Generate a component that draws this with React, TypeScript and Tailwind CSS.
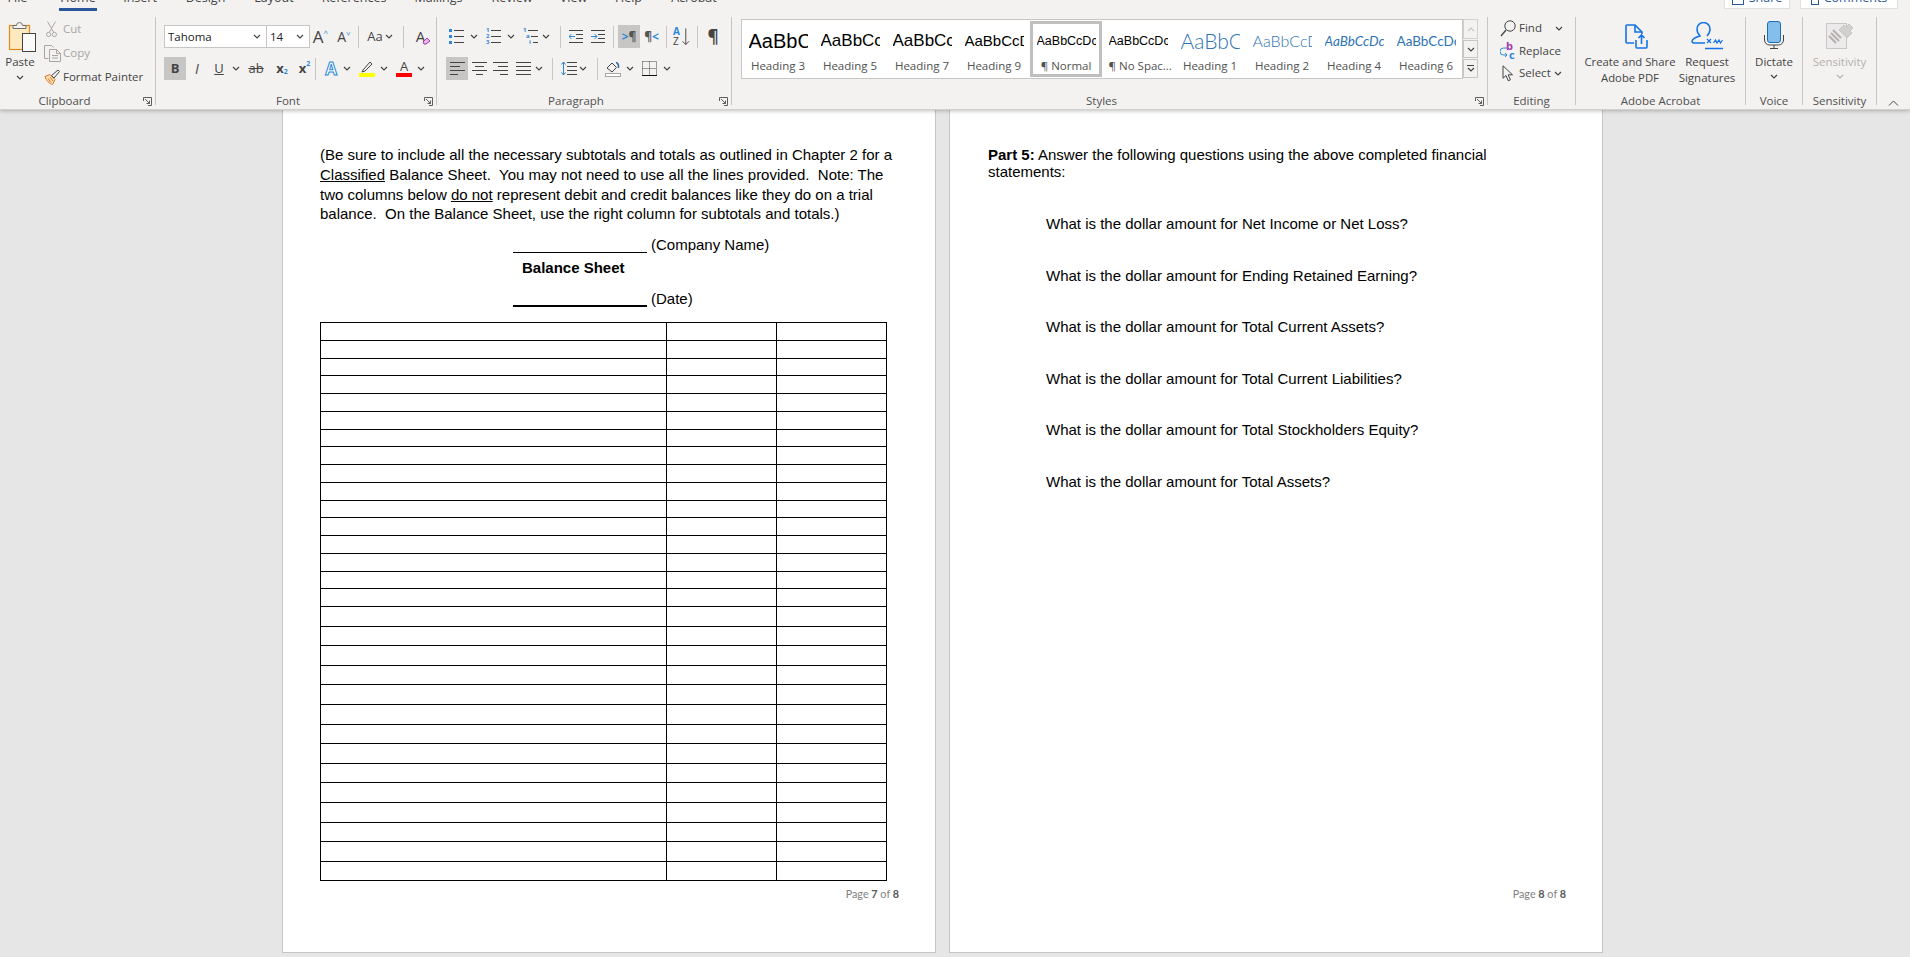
import type { ReactNode } from "react";

// small chevron used all over the ribbon
function Chev({ color = "#444444" }: { color?: string }) {
  return (
    <svg width="8" height="5" viewBox="0 0 8 5" fill="none" stroke={color} strokeWidth="1.2">
      <path d="M1 1l3 3 3-3" />
    </svg>
  );
}

function Cell({ className = "", children }: { className?: string; children?: ReactNode }) {
  return <div className={`flex h-[23px] shrink-0 items-center justify-center ${className}`}>{children}</div>;
}

function Sep({ className = "" }: { className?: string }) {
  return <div className={`h-[22px] w-px shrink-0 self-center bg-[#c8c6c4] ${className}`} />;
}

function Launcher() {
  return (
    <svg width="9" height="9" viewBox="0 0 9 9" fill="none" stroke="#605e5c" className="mr-[3px] ml-[4px] shrink-0">
      <path d="M.5 4V.5h8v8H5" />
      <path d="M2 2l4.5 4.5M6.5 3.5v3h-3" />
    </svg>
  );
}

function Group({ label, launcher, className, labelClass = "", children }: { label: string; launcher?: boolean; className: string; labelClass?: string; children: ReactNode }) {
  return (
    <div className={`flex h-[88px] shrink-0 flex-col border-r border-[#c8c6c4] ${className}`}>
      <div className="min-h-0 flex-1">{children}</div>
      <div className="-mb-1 flex h-4 shrink-0 items-center text-[11.5px] text-[#505050]">
        <span className={`flex-1 text-center ${labelClass}`}>{label}</span>
        {launcher && <Launcher />}
      </div>
    </div>
  );
}

function Lines({ n = 4, w = 15, x = 0 }: { n?: number; w?: number; x?: number }) {
  const gap = 12 / (n - 1);
  return (
    <>
      {Array.from({ length: n }).map((_, i) => (
        <line key={i} x1={x} x2={x + w} y1={1.5 + i * gap} y2={1.5 + i * gap} stroke="#444444" />
      ))}
    </>
  );
}

function PasteIcon() {
  return (
    <svg width="32" height="32" viewBox="0 0 32 32" fill="none" className="ml-[8px]">
      <rect x="1.5" y="4.5" width="20" height="24" fill="#fde9bd" stroke="#e08a1e" strokeWidth="1.2" />
      <path d="M5 4.5h3.5a2.5 2.5 0 0 1 6 0H18v3H5z" fill="#f3f2f1" stroke="#6e6e6e" />
      <rect x="14.5" y="12.5" width="13" height="18" fill="#fafafa" stroke="#444444" />
    </svg>
  );
}

function ScissorsIcon() {
  return (
    <svg width="11" height="17" viewBox="0 0 11 17" fill="none" stroke="#a8a6a4">
      <path d="M1.5.5l6 10.5M9.5.5l-6 10.5" />
      <circle cx="2.6" cy="13.5" r="2.1" />
      <circle cx="8.4" cy="13.5" r="2.1" />
    </svg>
  );
}

function CopyIcon() {
  return (
    <svg width="17" height="17" viewBox="0 0 17 17" fill="none" stroke="#a8a6a4">
      <path d="M4.5 13.5H.5v-13h7l2 2" />
      <path d="M5.5 4.5h7l4 4v8h-11zM12.5 4.5v4h4M8 10.5h6M8 13h6" />
    </svg>
  );
}

function PainterIcon() {
  return (
    <svg width="17" height="16" viewBox="0 0 17 16" fill="none">
      <path d="M1 7.5l5-2 5 5-2.5 5C6 15 2 11.5 1 7.5z" fill="#fbe3b3" stroke="#d9742b" />
      <path d="M4 9.5l3 4M6 8l3 4" stroke="#d9742b" />
      <path d="M7.5 6.5l2.5 2.5 5.5-6.5-1.5-1.5z" fill="#f3f2f1" stroke="#444444" />
    </svg>
  );
}

function BulletsIcon() {
  return (
    <svg width="15" height="15" viewBox="0 0 15 15">
      <Lines n={3} w={10} x={5} />
      <rect y="0" width="3" height="3" fill="#2b88d8" />
      <rect y="6" width="3" height="3" fill="#2b88d8" />
      <rect y="12" width="3" height="3" fill="#2b88d8" />
    </svg>
  );
}

function NumberedIcon({ multi }: { multi?: boolean }) {
  return (
    <div className="relative h-[15px] w-[15px] shrink-0 font-bold text-[#2b88d8]">
      <svg width="15" height="15" viewBox="0 0 15 15">
        {multi ? (
          <>
            <line x1="5" x2="15" y1="1.5" y2="1.5" stroke="#444444" />
            <line x1="8" x2="15" y1="7.5" y2="7.5" stroke="#444444" />
            <line x1="10" x2="15" y1="13.5" y2="13.5" stroke="#444444" />
          </>
        ) : (
          <Lines n={3} w={10} x={5} />
        )}
      </svg>
      <span className="absolute top-[-2px] left-0 text-[6px] leading-[7px]">1</span>
      <span className={`absolute top-[4px] text-[6px] leading-[7px] ${multi ? "left-[3px]" : "left-0"}`}>{multi ? "a" : "2"}</span>
      <span className={`absolute top-[10px] text-[6px] leading-[7px] ${multi ? "left-[6px]" : "left-0"}`}>{multi ? "i" : "3"}</span>
    </div>
  );
}

function IndentIcon({ increase }: { increase?: boolean }) {
  return (
    <svg width="14" height="13" viewBox="0 0 14 13" fill="none">
      <line x1="0" x2="14" y1="0.5" y2="0.5" stroke="#444444" />
      <line x1="7" x2="14" y1="4.5" y2="4.5" stroke="#444444" />
      <line x1="7" x2="14" y1="8.5" y2="8.5" stroke="#444444" />
      <line x1="0" x2="14" y1="12.5" y2="12.5" stroke="#444444" />
      {increase ? (
        <path d="M0 6.5h6M3.5 4l2.5 2.5L3.5 9" stroke="#2b88d8" />
      ) : (
        <path d="M6 6.5H0M2.5 4L0 6.5 2.5 9" stroke="#2b88d8" />
      )}
    </svg>
  );
}

function AlignIcon({ kind }: { kind: "left" | "center" | "right" | "justify" }) {
  const d = {
    left: "M0 .5h15M0 4.5h10M0 8.5h15M0 12.5h8",
    center: "M0 .5h15M3 4.5h9M0 8.5h15M4 12.5h7",
    right: "M0 .5h15M5 4.5h10M0 8.5h15M7 12.5h8",
    justify: "M0 .5h15M0 4.5h15M0 8.5h15M0 12.5h15",
  }[kind];
  return (
    <svg width="15" height="13" viewBox="0 0 15 13" fill="none" stroke="#444444">
      <path d={d} />
    </svg>
  );
}

function LineSpacingIcon() {
  return (
    <svg width="16" height="15" viewBox="0 0 16 15" fill="none">
      <path d="M6 1.5h10M6 5.5h10M6 9.5h10M6 13.5h10" stroke="#444444" />
      <path d="M2.5 1v13M.5 3.5l2-2.5 2 2.5M.5 11.5l2 2.5 2-2.5" stroke="#2b88d8" />
    </svg>
  );
}

function ShadingIcon() {
  return (
    <svg width="16" height="16" viewBox="0 0 16 16" fill="none">
      <path d="M2 7l5-5 4.5 4.5-4.5 4.5z" fill="#f3f2f1" stroke="#444444" />
      <path d="M11 1.5c2 .5 2.8 2.6 2.5 5.5" stroke="#2b6cb0" strokeWidth="1.6" />
      <rect x=".5" y="12.5" width="15" height="3" fill="#ffffff" stroke="#a6a6a6" />
    </svg>
  );
}

function BordersIcon() {
  return (
    <svg width="15" height="15" viewBox="0 0 15 15" fill="none">
      <path d="M.5 .5h14v14M.5 .5v14M7.5 .5v14M.5 7.5h14" stroke="#444444" strokeDasharray="1 1" />
      <line x1="0" x2="15" y1="14.5" y2="14.5" stroke="#111111" />
    </svg>
  );
}

function SortIcon() {
  return (
    <div className="flex h-[19px] w-[17px] shrink-0 items-center">
      <div className="flex w-[10px] flex-col text-[10px] leading-[9.5px]">
        <span className="font-bold text-[#2b88d8]">A</span>
        <span className="text-[#444444]">Z</span>
      </div>
      <svg width="8" height="18" viewBox="0 0 8 18" fill="none" stroke="#444444">
        <path d="M4 0v17M.5 13.5L4 17l3.5-3.5" />
      </svg>
    </div>
  );
}

function FindIcon() {
  return (
    <svg width="16" height="17" viewBox="0 0 16 17" fill="none" stroke="#444444">
      <circle cx="10" cy="6" r="5.2" />
      <path d="M6 10l-5 6" strokeWidth="1.3" />
    </svg>
  );
}

function SelectIcon() {
  return (
    <svg width="12" height="17" viewBox="0 0 12 17" fill="none" stroke="#444444">
      <path d="M1 .8v12.5l3-2.8 2.2 5.3 2.2-1-2.2-5h4.3z" />
    </svg>
  );
}

function PdfIcon() {
  return (
    <svg width="24" height="26" viewBox="0 0 24 26" fill="none" stroke="#1473e6" strokeWidth="1.6" className="ml-[14px]">
      <path d="M9 19H2a1 1 0 0 1-1-1V2a1 1 0 0 1 1-1h8l7 7v2" />
      <path d="M10 1v7h7" />
      <path d="M11 16v7a1 1 0 0 0 1 1h9a1 1 0 0 0 1-1v-7" />
      <path d="M16.5 20v-9M13.5 14l3-3 3 3" />
    </svg>
  );
}

function SignIcon() {
  return (
    <svg width="32" height="28" viewBox="0 0 32 28" fill="none" stroke="#1473e6" strokeWidth="1.5">
      <path d="M1 19c1-3 5-4 8-5-2-2-3-4-3-7a6.500 6.500 0 0 1 13 0c0 3-1 5-3 7" />
      <path d="M1 19c0 1 .5 2 2 2h11" />
      <path d="M16 17l4 4M20 17l-4 4" strokeWidth="1.2" />
      <path d="M22.500 21l2-3 1.500 3 2-3 1.500 3 2-3" strokeWidth="1.2" />
      <path d="M14 26.500h18" strokeWidth="1.5" />
    </svg>
  );
}

function MicIcon() {
  return (
    <svg width="20" height="28" viewBox="0 0 20 28" fill="none">
      <rect x="3.500" y=".5" width="13" height="21" rx="2.500" fill="#83beec" stroke="#1a6fb5" />
      <path d="M.5 14v5a5 5 0 0 0 5 5h9a5 5 0 0 0 5-5v-5M10 24v3.500M6 27.500h8" stroke="#444444" />
    </svg>
  );
}

function StampIcon() {
  return (
    <svg width="28" height="28" viewBox="0 0 28 28" fill="none">
      <rect x=".5" y="2.500" width="20" height="25" fill="#eceaea" stroke="#c8c6c4" />
      <path d="M5 12l8 8M3 15l7 7M7 9l8 8" stroke="#b3b0ad" strokeWidth="2" />
      <path d="M13 9l5-5 2 2 3-3 4 4-3 3 2 2-5 5z" fill="#d2d0ce" stroke="#c8c6c4" />
    </svg>
  );
}

const styleItems = [
  { label: "Heading 3", cls: "font-['Liberation_Sans',sans-serif] text-[20px] text-black" },
  { label: "Heading 5", cls: "font-['Liberation_Sans',sans-serif] text-[17px] text-black" },
  { label: "Heading 7", cls: "font-['Liberation_Sans',sans-serif] text-[17px] text-black" },
  { label: "Heading 9", cls: "font-['Liberation_Sans',sans-serif] text-[15px] text-black" },
  { label: "¶ Normal", cls: "font-['Liberation_Sans',sans-serif] text-[12.5px] text-black", selected: true },
  { label: "¶ No Spac...", cls: "font-['Liberation_Sans',sans-serif] text-[12.5px] text-black" },
  { label: "Heading 1", cls: "font-['Lato',sans-serif] text-[21px] font-light text-[#2e74b5]" },
  { label: "Heading 2", cls: "font-['Lato',sans-serif] text-[16px] font-light text-[#2e74b5]" },
  { label: "Heading 4", cls: "font-['Lato',sans-serif] text-[13.5px] italic text-[#2e74b5]" },
  { label: "Heading 6", cls: "font-['Lato',sans-serif] text-[13.5px] text-[#2e74b5]" },
];

function StyleItem({ label, cls, selected }: { label: string; cls: string; selected?: boolean }) {
  return (
    <div className={`my-px h-14 w-[72px] shrink-0 border-[3px] px-[3.5px] ${selected ? "border-[#bfbfbf]" : "border-transparent"}`}>
      <div className={`flex h-[34px] items-center overflow-hidden whitespace-nowrap ${cls}`}>AaBbCcDc</div>
      <div className="h-4 text-center text-[11.5px] leading-4 whitespace-nowrap text-[#505050]">{label}</div>
    </div>
  );
}

const tabs = [
  { name: "File", cls: "w-[35px]" },
  { name: "Home", cls: "ml-[24px] w-[38px] border-b-[3px] border-[#2b579a]" },
  { name: "Insert", cls: "ml-[23px] w-[40px]" },
  { name: "Design", cls: "ml-[20px] w-[51px]" },
  { name: "Layout", cls: "ml-[20px] w-[46px]" },
  { name: "References", cls: "ml-[20px] w-[74px]" },
  { name: "Mailings", cls: "ml-[20px] w-[55px]" },
  { name: "Review", cls: "ml-[24px] w-[44px]" },
  { name: "View", cls: "ml-[24px] w-[31px]" },
  { name: "Help", cls: "ml-[24px] w-[31px]" },
  { name: "Acrobat", cls: "ml-[25px] w-[50px]" },
];

function Ribbon() {
  return (
    <div className="relative z-10 h-[110px] shrink-0 border-b border-[#d2d0ce] bg-[#f3f2f1] font-['Open_Sans',sans-serif] text-[11.5px] text-[#444444] shadow-[0_1px_4px_rgba(0,0,0,0.25)]">
      <div className="flex h-[11px] overflow-hidden">
        {tabs.map((t) => (
          <div key={t.name} className={`-mt-[10px] h-[21px] shrink-0 text-center text-[12.5px] leading-4 ${t.cls}`}>
            {t.name}
          </div>
        ))}
        <div className="mr-3 ml-auto flex gap-[10px]">
          <div className="-mt-[11px] flex h-5 w-[66px] items-start justify-center gap-[5px] border border-[#e1dfdd] bg-white text-[12.5px] leading-4 text-[#2b579a]">
            <div className="mt-[3px] h-3 w-3 border border-[#2b579a]" />
            Share
          </div>
          <div className="-mt-[11px] flex h-5 w-[98px] items-start justify-center gap-[5px] border border-[#e1dfdd] bg-white text-[12.5px] leading-4 text-[#2b579a]">
            <div className="mt-[3px] h-3 w-2 border border-[#2b579a]" />
            Comments
          </div>
        </div>
      </div>

      <div className="flex pt-[6px]">
        <Group label="Clipboard" launcher labelClass="pr-[10px]" className="w-[156px]">
          <div className="flex">
            <div className="flex w-[44px] shrink-0 flex-col pt-1">
              <PasteIcon />
              <div className="mt-px w-[40px] text-center leading-4">Paste</div>
              <div className="mt-[5px] flex w-[40px] justify-center">
                <Chev />
              </div>
            </div>
            <div className="flex flex-col">
              <div className="flex h-6 items-center text-[#a8a6a4]">
                <div className="flex w-[19px] justify-center pr-[4px]">
                  <ScissorsIcon />
                </div>
                Cut
              </div>
              <div className="flex h-6 items-center text-[#a8a6a4]">
                <div className="flex w-[19px] justify-center pr-[2px]">
                  <CopyIcon />
                </div>
                Copy
              </div>
              <div className="flex h-6 items-center whitespace-nowrap">
                <div className="flex w-[19px] justify-center pr-[2px]">
                  <PainterIcon />
                </div>
                Format Painter
              </div>
            </div>
          </div>
        </Group>

        <Group label="Font" launcher className="w-[281px]">
          <div className="flex pt-2 pl-2">
            <div className="flex h-[23px] w-[103px] shrink-0 items-center justify-between border border-[#c8c6c4] bg-white pr-[5px] pl-[3px] text-[#222222]">
              Tahoma
              <Chev />
            </div>
            <div className="-ml-px flex h-[23px] w-[44px] shrink-0 items-center justify-between border border-[#c8c6c4] bg-white pr-[5px] pl-[3px] text-[#222222]">
              14
              <Chev />
            </div>
            <Cell className="w-[21px] text-[17px]">
              A<span className="mb-2 text-[8px] text-[#2b88d8]">^</span>
            </Cell>
            <Cell className="ml-[1px] w-[24px] text-[14px]">
              A<span className="mb-2 rotate-180 text-[8px] text-[#2b88d8]">^</span>
            </Cell>
            <Sep className="ml-[2px]" />
            <Cell className="ml-2 w-4 text-[13px]">Aa</Cell>
            <Cell className="w-3">
              <Chev />
            </Cell>
            <Sep className="ml-2" />
            <Cell className="relative ml-2 w-[17px] text-[15px]">
              A
              <svg width="9" height="8" viewBox="0 0 9 8" className="absolute right-[-2px] bottom-[3px]">
                <path d="M1 5l4-4 3 3-4 3H2z" fill="#e3b7e8" stroke="#a33ab0" />
              </svg>
            </Cell>
          </div>
          <div className="mt-[9px] flex pl-2">
            <Cell className="w-[22px] bg-[#c8c6c4] text-[13px] font-bold">B</Cell>
            <Cell className="w-[22px] text-[14px] italic">I</Cell>
            <Cell className="w-[22px] text-[13px] underline">U</Cell>
            <Cell className="w-3">
              <Chev />
            </Cell>
            <Cell className="w-7 text-[13px] line-through">ab</Cell>
            <Cell className="w-6 text-[13px] font-bold">
              x<span className="mt-2 text-[7px] text-[#2b88d8]">2</span>
            </Cell>
            <Cell className="w-[21px] text-[13px] font-bold">
              x<span className="mb-2 text-[7px] text-[#2b88d8]">2</span>
            </Cell>
            <Sep />
            <Cell className="ml-1 w-[22px] text-[17px] font-bold text-white [-webkit-text-stroke:1px_#2b88d8]">A</Cell>
            <Cell className="w-[9px]">
              <Chev />
            </Cell>
            <Cell className="ml-[5px] w-[22px]">
              <svg width="16" height="16" viewBox="0 0 16 16" fill="none">
                <path d="M4 9l7-8 2 2-7 7-3 1z" stroke="#444444" />
                <rect y="12" width="16" height="4" fill="#ffff00" />
              </svg>
            </Cell>
            <Cell className="ml-px w-[10px]">
              <Chev />
            </Cell>
            <Cell className="ml-1 w-[22px] flex-col text-[13px] leading-[13px]">
              A
              <div className="h-1 w-4 bg-[#ff0000]" />
            </Cell>
            <Cell className="ml-px w-[10px]">
              <Chev />
            </Cell>
          </div>
        </Group>

        <Group label="Paragraph" launcher className="w-[295px]">
          <div className="flex pt-2 pl-3">
            <Cell className="w-[15px]">
              <BulletsIcon />
            </Cell>
            <Cell className="w-5">
              <Chev />
            </Cell>
            <Cell className="ml-[2px] w-[15px]">
              <NumberedIcon />
            </Cell>
            <Cell className="w-5">
              <Chev />
            </Cell>
            <Cell className="ml-[2px] w-[15px]">
              <NumberedIcon multi />
            </Cell>
            <Cell className="w-4">
              <Chev />
            </Cell>
            <Sep className="ml-[6px]" />
            <Cell className="ml-2 w-[14px]">
              <IndentIcon />
            </Cell>
            <Cell className="ml-2 w-[14px]">
              <IndentIcon increase />
            </Cell>
            <Sep className="ml-2" />
            <Cell className="ml-1 w-[22px] bg-[#c8c6c4] text-[12px] font-bold text-[#555555]">
              <span className="text-[#2b88d8]">&gt;</span>¶
            </Cell>
            <Cell className="w-[23px] text-[12px] font-bold text-[#555555]">
              ¶<span className="text-[#2b88d8]">&lt;</span>
            </Cell>
            <Sep className="ml-[3px]" />
            <Cell className="ml-[6px] w-[17px]">
              <SortIcon />
            </Cell>
            <Sep className="ml-[7px]" />
            <Cell className="ml-1 w-[22px] text-[17px] font-bold">¶</Cell>
          </div>
          <div className="mt-[9px] flex pl-[9px]">
            <Cell className="w-[22px] bg-[#c8c6c4]">
              <AlignIcon kind="left" />
            </Cell>
            <Cell className="w-[22px]">
              <AlignIcon kind="center" />
            </Cell>
            <Cell className="w-[21px]">
              <AlignIcon kind="right" />
            </Cell>
            <Cell className="w-6">
              <AlignIcon kind="justify" />
            </Cell>
            <Cell className="w-2">
              <Chev />
            </Cell>
            <Sep className="ml-[9px]" />
            <Cell className="ml-2 w-4">
              <LineSpacingIcon />
            </Cell>
            <Cell className="w-3">
              <Chev />
            </Cell>
            <Sep className="ml-2" />
            <Cell className="ml-[7px] w-4">
              <ShadingIcon />
            </Cell>
            <Cell className="w-[18px]">
              <Chev />
            </Cell>
            <Cell className="ml-[3px] w-[15px]">
              <BordersIcon />
            </Cell>
            <Cell className="w-5">
              <Chev />
            </Cell>
          </div>
        </Group>

        <Group label="Styles" launcher className="w-[756px]">
          <div className="flex pt-[2px] pl-[9px]">
            <div className="flex h-[60px] w-[722px] shrink-0 border border-[#c8c6c4] bg-white">
              {styleItems.map((s) => (
                <StyleItem key={s.label} {...s} />
              ))}
            </div>
            <div className="flex w-[15px] shrink-0 flex-col gap-px">
              <div className="flex h-5 items-center justify-center border border-[#d2d0ce]">
                <span className="rotate-180">
                  <Chev color="#c8c6c4" />
                </span>
              </div>
              <div className="flex h-[18px] items-center justify-center border border-[#c8c6c4]">
                <Chev />
              </div>
              <div className="flex h-[19px] flex-col items-center justify-center gap-px border border-[#c8c6c4]">
                <div className="h-px w-[7px] bg-[#444444]" />
                <Chev />
              </div>
            </div>
          </div>
        </Group>

        <Group label="Editing" className="w-[88px]">
          <div className="flex flex-col pl-3">
            <div className="flex h-[22px] items-center">
              <div className="w-[19px]">
                <FindIcon />
              </div>
              Find
              <div className="ml-[13px]">
                <Chev />
              </div>
            </div>
            <div className="mt-px flex h-[22px] items-center">
              <div className="relative h-4 w-[19px] text-[11px] leading-[11px] font-bold">
                <span className="absolute top-[-3px] left-[6px] text-[#a33ab0]">b</span>
                <span className="absolute top-[6px] left-[9px] text-[#2b88d8]">c</span>
                <svg width="8" height="10" viewBox="0 0 8 10" fill="none" stroke="#2b88d8" className="absolute top-[4px] left-0">
                  <path d="M7 1H3.500a2.500 2.500 0 0 0 0 7H7M5 6l2 2-2 2" />
                </svg>
              </div>
              Replace
            </div>
            <div className="flex h-[22px] items-center">
              <div className="w-[19px] pl-[2px]">
                <SelectIcon />
              </div>
              Select
              <div className="ml-[3px]">
                <Chev />
              </div>
            </div>
          </div>
        </Group>

        <Group label="Adobe Acrobat" className="w-[170px]">
          <div className="flex pt-[7px] text-center leading-4">
            <div className="flex w-[108px] shrink-0 flex-col items-center">
              <div className="flex h-[26px] items-start">
                <PdfIcon />
              </div>
              <div className="mt-[4px] text-[11.3px] whitespace-nowrap">
                Create and Share
                <br />
                Adobe PDF
              </div>
            </div>
            <div className="flex w-[46px] shrink-0 flex-col items-center">
              <div className="-mt-[2px] flex h-[28px] items-start">
                <SignIcon />
              </div>
              <div className="mt-[4px] whitespace-nowrap">
                Request
                <br />
                Signatures
              </div>
            </div>
          </div>
        </Group>

        <Group label="Voice" className="w-[57px]">
          <div className="flex flex-col items-center pt-1">
            <MicIcon />
            <div className="mt-[5px] leading-4">Dictate</div>
            <div className="mt-[4px]">
              <Chev />
            </div>
          </div>
        </Group>

        <Group label="Sensitivity" className="w-[74px]">
          <div className="flex flex-col items-center pt-1 text-[#b3b0ad]">
            <StampIcon />
            <div className="mt-[5px] leading-4">Sensitivity</div>
            <div className="mt-[4px]">
              <Chev color="#b3b0ad" />
            </div>
          </div>
        </Group>

        <div className="flex h-[88px] flex-1 items-end justify-center">
          <svg width="11" height="6" viewBox="0 0 11 6" fill="none" stroke="#444444" className="mb-[-1px]">
            <path d="M1 5.500l4.500-4.500 4.500 4.500" />
          </svg>
        </div>
      </div>
    </div>
  );
}

const questions = [
  "What is the dollar amount for Net Income or Net Loss?",
  "What is the dollar amount for Ending Retained Earning?",
  "What is the dollar amount for Total Current Assets?",
  "What is the dollar amount for Total Current Liabilities?",
  "What is the dollar amount for Total Stockholders Equity?",
  "What is the dollar amount for Total Assets?",
];

function Footer({ page, className }: { page: number; className: string }) {
  return (
    <div className={`mt-auto mb-[50px] h-4 text-right font-['Lato',sans-serif] text-[10.8px] leading-4 text-[#7f7f7f] ${className}`}>
      Page <b className="text-[#595959]">{page}</b> of <b className="text-[#595959]">8</b>
    </div>
  );
}

function BalancePage() {
  return (
    <div className="flex h-[844px] w-[654px] flex-col border-x border-b border-[#c6c6c6] bg-white pt-9">
      <div className="pl-[37px] text-[15px] leading-5 whitespace-pre text-black">
        <div>(Be sure to include all the necessary subtotals and totals as outlined in Chapter 2 for a</div>
        <div>
          <span className="underline">Classified</span> Balance Sheet.  You may not need to use all the lines provided.  Note: The
        </div>
        <div>
          two columns below <span className="underline">do not</span> represent debit and credit balances like they do on a trial
        </div>
        <div className="-mt-px">balance.  On the Balance Sheet, use the right column for subtotals and totals.)</div>
        <div className="mt-[11px] flex h-5 pl-[193px]">
          <div className="h-[18px] w-[134px] border-b border-black" />
          <span className="ml-1">(Company Name)</span>
        </div>
        <div className="mt-[3px] h-5 pl-[202px] font-bold">Balance Sheet</div>
        <div className="mt-[11px] flex h-5 pl-[193px]">
          <div className="h-[18px] w-[134px] border-b-2 border-black" />
          <span className="ml-1">(Date)</span>
        </div>
      </div>
      <div className="mt-[13px] ml-[37px] w-[567px] border border-black">
        {Array.from({ length: 16 }).map((_, i) => (
          <div key={i} className="grid h-[17.75px] grid-cols-[346px_110px_109px] border-b border-black">
            <div className="border-r border-black" />
            <div className="border-r border-black" />
            <div />
          </div>
        ))}
        {Array.from({ length: 14 }).map((_, i) => (
          <div key={i} className="grid h-[19.62px] grid-cols-[346px_110px_109px] border-b border-black last:h-[18px] last:border-b-0">
            <div className="border-r border-black" />
            <div className="border-r border-black" />
            <div />
          </div>
        ))}
      </div>
      <Footer page={7} className="pr-[36px]" />
    </div>
  );
}

function QuestionsPage() {
  return (
    <div className="flex h-[844px] w-[654px] flex-col border-x border-b border-[#c6c6c6] bg-white pt-[37px]">
      <div className="pl-[38px] text-[15px] leading-[17px] text-black">
        <div>
          <b>Part 5:</b> Answer the following questions using the above completed financial
        </div>
        <div>statements:</div>
        <div className="mt-[35px] flex flex-col gap-[34.6px] pl-[58px]">
          {questions.map((q) => (
            <div key={q}>{q}</div>
          ))}
        </div>
      </div>
      <Footer page={8} className="pr-[36px]" />
    </div>
  );
}

export default function App() {
  return (
    <div className="flex h-[957px] w-[1910px] flex-col overflow-hidden bg-[#e6e6e6]">
      <Ribbon />
      <div className="-mt-px flex gap-[13px] pl-[282px] font-['Liberation_Sans',sans-serif]">
        <BalancePage />
        <QuestionsPage />
      </div>
    </div>
  );
}
